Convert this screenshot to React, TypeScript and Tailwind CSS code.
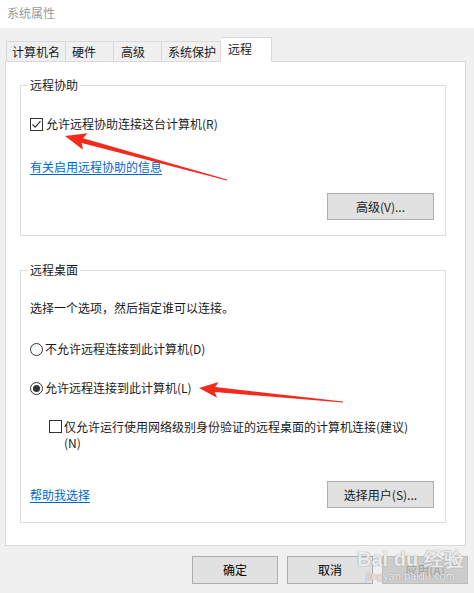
import React from "react"

const arrow = (tx: number, ty: number, hx: number, hy: number, headLen: number, headW: number, w0: number, w1: number) => {
  const dx = hx - tx
  const dy = hy - ty
  const len = Math.hypot(dx, dy)
  const ux = dx / len
  const uy = dy / len
  const nx = -uy
  const ny = ux
  const bx = hx - ux * headLen
  const by = hy - uy * headLen
  const p = (x: number, y: number) => `${x.toFixed(1)},${y.toFixed(1)}`
  return [
    p(tx + nx * w0 / 2, ty + ny * w0 / 2),
    p(bx + nx * w1 / 2, by + ny * w1 / 2),
    p(bx + nx * headW / 2 - ux * 3, by + ny * headW / 2 - uy * 3),
    p(hx, hy),
    p(bx - nx * headW / 2 - ux * 3, by - ny * headW / 2 - uy * 3),
    p(bx - nx * w1 / 2, by - ny * w1 / 2),
    p(tx - nx * w0 / 2, ty - ny * w0 / 2),
  ].join(" ")
}

const Btn = ({ label, disabled }: { label: string; disabled?: boolean }) => (
  <div
    className={
      disabled
        ? "w-[86px] h-[28px] flex items-center justify-center border border-[#bfbfbf] bg-[#cccccc] text-[#a0a0a0]"
        : "w-[86px] h-[28px] flex items-center justify-center border border-[#adadad] bg-[#e1e1e1] text-black"
    }
  >
    {label}
  </div>
)

const Group = ({ title, height, children }: { title: string; height: string; children: React.ReactNode }) => (
  <div className={`relative ml-[14px] w-[426px] border border-[#dcdcdc] ${height}`}>
    <span className="absolute left-[7px] -top-[9px] bg-white px-[2px] leading-[16px]">{title}</span>
    {children}
  </div>
)

export default function App() {
  return (
    <div className="relative w-[474px] h-[593px] overflow-hidden bg-[#f0f0f0] text-[12px] leading-[16px] text-[#1a1a1a] font-['Noto_Sans_CJK_SC','Microsoft_YaHei',sans-serif]">
      <div className="h-[28px] bg-white flex items-center pl-[7px] text-[#9a9a9a] pb-[2px]">系统属性</div>

      <div className="mt-[9px] pl-[6px] flex items-end relative z-10 -mb-px">
        <div className="h-[21px] w-[60px] border border-[#d9d9d9] border-b-0 flex items-center justify-center">计算机名</div>
        <div className="h-[21px] w-[48px] border border-l-0 border-[#d9d9d9] border-b-0 flex items-center pl-[6px]">硬件</div>
        <div className="h-[21px] w-[48px] border border-l-0 border-[#d9d9d9] border-b-0 flex items-center pl-[7px]">高级</div>
        <div className="h-[21px] w-[59px] border border-l-0 border-[#d9d9d9] border-b-0 flex items-center pl-[6px]">系统保护</div>
        <div className="h-[25px] w-[51px] bg-white border border-l-0 border-[#d9d9d9] border-b-0 flex items-center pl-[7px] pb-[3px]">远程</div>
      </div>

      <div className="ml-[5px] w-[461px] h-[485px] bg-white border border-[#d9d9d9] pt-[23px]">
        <Group title="远程协助" height="h-[151px]">
          <div className="flex flex-col pt-[30px] pl-[9px]">
            <div className="flex items-center h-[16px]">
              <span className="w-[13px] h-[13px] border border-[#333] flex items-center justify-center">
                <svg width="11" height="11" viewBox="0 0 11 11">
                  <path d="M1.5 5.5 L4.2 8.2 L9.5 2.2" fill="none" stroke="#333" strokeWidth="1.2" />
                </svg>
              </span>
              <span className="ml-[3px]">允许远程协助连接这台计算机(R)</span>
            </div>
            <span className="mt-[27px] h-[16px] text-[#0066cc] underline underline-offset-2">有关启用远程协助的信息</span>
            <div className="self-end mr-[11px] mt-[18px] w-[107px] h-[27px] border border-[#adadad] bg-[#e1e1e1] flex items-center justify-center">
              高级(V)...
            </div>
          </div>
        </Group>

        <div className="mt-[34px]">
          <Group title="远程桌面" height="h-[253px]">
            <div className="flex flex-col pt-[29px] pl-[9px] pr-[11px]">
              <span className="h-[16px]">选择一个选项，然后指定谁可以连接。</span>
              <div className="mt-[25px] flex items-center h-[16px]">
                <span className="w-[13px] h-[13px] rounded-full border border-[#333]" />
                <span className="ml-[2px]">不允许远程连接到此计算机(D)</span>
              </div>
              <div className="mt-[23px] flex items-center h-[16px]">
                <span className="w-[13px] h-[13px] rounded-full border border-[#333] flex items-center justify-center">
                  <span className="w-[7px] h-[7px] rounded-full bg-[#333]" />
                </span>
                <span className="ml-[2px]">允许远程连接到此计算机(L)</span>
              </div>
              <div className="mt-[23px] ml-[19px] flex items-start">
                <span className="mt-[1px] w-[13px] h-[13px] border border-[#333] shrink-0" />
                <span className="ml-[2px] w-[350px]">仅允许运行使用网络级别身份验证的远程桌面的计算机连接(建议)(N)</span>
              </div>
              <div className="mt-[30px] flex items-center justify-between">
                <span className="text-[#0066cc] underline underline-offset-2">帮助我选择</span>
                <div className="w-[107px] h-[27px] border border-[#adadad] bg-[#e1e1e1] flex items-center justify-center">
                  选择用户(S)...
                </div>
              </div>
            </div>
          </Group>
        </div>
      </div>

      <div className="mt-[10px] flex justify-end gap-[9px] pr-[6px]">
        <Btn label="确定" />
        <Btn label="取消" />
        <Btn label="应用(A)" disabled />
      </div>

      <div className="absolute left-[357px] top-[548px] flex flex-col items-center pointer-events-none text-white/80 [text-shadow:0_0_1px_#9a9a9a,0_0_1px_#9a9a9a]">
        <span className="text-[20px] leading-[22px] font-bold font-['Liberation_Sans',sans-serif]">Bai du 经验</span>
        <span className="text-[11px] leading-[12px] font-['Liberation_Sans',sans-serif]">jingyan.baidu.com</span>
      </div>

      <svg className="absolute inset-0 pointer-events-none" width="474" height="593">
        <polygon points={arrow(227, 180, 65, 136, 18, 17, 1, 5)} fill="#f52a1c" />
        <polygon points={arrow(343, 402, 199, 388, 16, 16, 1, 5)} fill="#f52a1c" />
      </svg>
    </div>
  )
}
